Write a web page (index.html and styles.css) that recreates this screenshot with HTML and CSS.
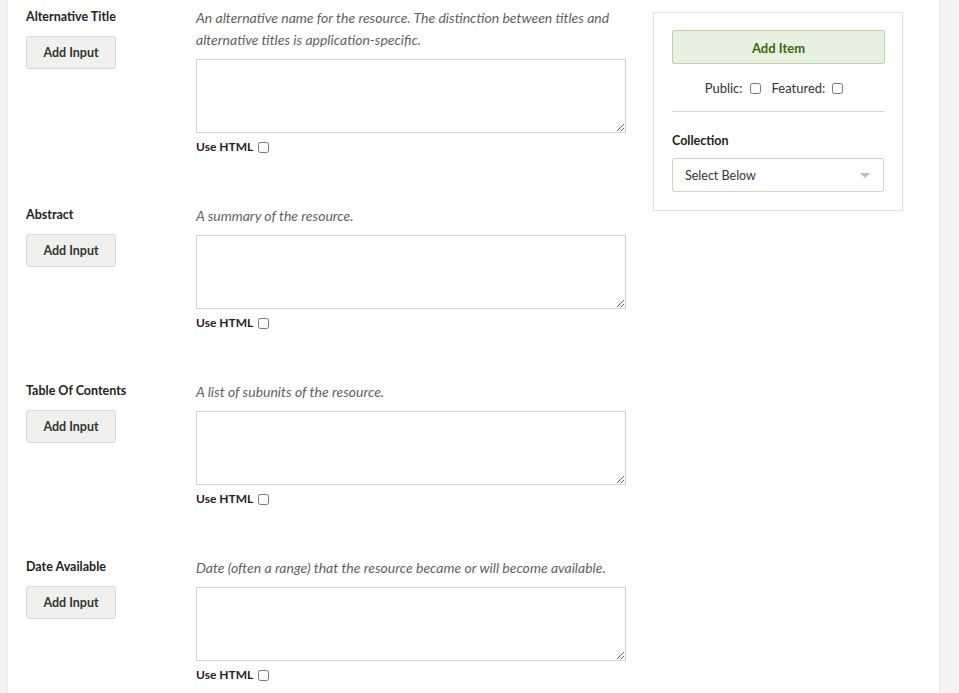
FILE: index.html
```html
<!DOCTYPE html>
<html lang="en">
<head>
<meta charset="utf-8">
<title>Add Item</title>
<link rel="stylesheet" href="styles.css">
</head>
<body>
<div class="page">
  <div class="main">
    <div class="field">
      <div class="field-head">
        <label class="field-label">Alternative Title</label>
        <button class="add-input" type="button">Add Input</button>
      </div>
      <div class="field-body">
        <p class="explanation">An alternative name for the resource. The distinction between titles and alternative titles is application-specific.</p>
        <textarea class="field-text"></textarea>
        <label class="use-html">Use HTML <input type="checkbox"></label>
      </div>
    </div>
    <div class="field">
      <div class="field-head">
        <label class="field-label">Abstract</label>
        <button class="add-input" type="button">Add Input</button>
      </div>
      <div class="field-body">
        <p class="explanation">A summary of the resource.</p>
        <textarea class="field-text"></textarea>
        <label class="use-html">Use HTML <input type="checkbox"></label>
      </div>
    </div>
    <div class="field">
      <div class="field-head">
        <label class="field-label">Table Of Contents</label>
        <button class="add-input" type="button">Add Input</button>
      </div>
      <div class="field-body">
        <p class="explanation">A list of subunits of the resource.</p>
        <textarea class="field-text"></textarea>
        <label class="use-html">Use HTML <input type="checkbox"></label>
      </div>
    </div>
    <div class="field">
      <div class="field-head">
        <label class="field-label">Date Available</label>
        <button class="add-input" type="button">Add Input</button>
      </div>
      <div class="field-body">
        <p class="explanation">Date (often a range) that the resource became or will become available.</p>
        <textarea class="field-text"></textarea>
        <label class="use-html">Use HTML <input type="checkbox"></label>
      </div>
    </div>
  </div>
  <aside class="sidebar">
    <div class="panel">
      <button class="add-item" type="button">Add Item</button>
      <div class="flags">
        <label class="flag">Public: <input type="checkbox"></label>
        <label class="flag">Featured: <input type="checkbox"></label>
      </div>
      <div class="collection">
        <label class="collection-label">Collection</label>
        <div class="select">Select Below<span class="caret"></span></div>
      </div>
    </div>
  </aside>
</div>
</body>
</html>
```
FILE: styles.css
```css
* { box-sizing: border-box; }
html, body { margin: 0; padding: 0; }
body {
  background: #f3f3f3;
  font-family: Lato, "Open Sans", sans-serif;
  color: #222;
  height: 693px;
  overflow: hidden;
}
.page {
  margin-left: 8px;
  width: 931px;
  min-height: 693px;
  background: #fff;
  box-shadow: 0 0 4px rgba(0,0,0,0.06);
  display: flex;
}
.main {
  padding: 7px 0 0 18px;
  width: 645px;
}
.field {
  display: grid;
  grid-template-columns: 170px 430px;
  margin-bottom: 48px;
}
.field-label {
  display: block;
  font-weight: 700;
  font-size: 12.5px;
  line-height: 20px;
  color: #222;
}
.add-input {
  display: block;
  margin-top: 9px;
  width: 90px;
  height: 33px;
  padding: 0;
  background: #f0f1ef;
  border: 1px solid #d8d8cb;
  border-radius: 3px;
  font-family: Lato, sans-serif;
  font-weight: 700;
  font-size: 12.5px;
  color: #333;
}
.explanation {
  margin: 0;
  font-style: italic;
  font-size: 14px;
  line-height: 22px;
  color: #5f5f5f;
}
.field-text {
  display: block;
  margin-top: 8px;
  width: 430px;
  height: 74px;
  border: 1px solid #d6d4bd;
  border-radius: 0;
  background: #fff;
  font-family: Lato, sans-serif;
}
.use-html {
  display: flex;
  align-items: center;
  margin-top: 4px;
  font-weight: 700;
  font-size: 12px;
  line-height: 20px;
  color: #222;
}
input[type="checkbox"] {
  width: 11px;
  height: 11px;
  margin: 0 0 0 5px;
}
.sidebar {
  padding-top: 12px;
}
.panel {
  width: 250px;
  border: 1px solid #e2e2dc;
  background: #fff;
  padding: 17px 18px 18px;
  box-shadow: 0 1px 2px rgba(0,0,0,0.04);
}
.add-item {
  display: block;
  width: 213px;
  height: 34px;
  padding: 0;
  background: #e8f0df;
  border: 1px solid #b7d59e;
  border-radius: 2px;
  font-family: Lato, sans-serif;
  font-weight: 700;
  font-size: 13px;
  line-height: 34px;
  color: #3a6914;
}
.flags {
  display: flex;
  justify-content: center;
  gap: 11px;
  margin-top: 14px;
  padding: 0 8px 12px 0;
  border-bottom: 1px solid #d6d6cc;
  font-size: 13px;
  line-height: 21px;
  color: #333;
}
.flag {
  display: flex;
  align-items: center;
}
.flag input[type="checkbox"] {
  margin-left: 7px;
}
.collection {
  padding-top: 19px;
}
.collection-label {
  display: block;
  font-weight: 700;
  font-size: 12.5px;
  line-height: 20px;
  color: #222;
}
.select {
  position: relative;
  margin-top: 7px;
  height: 34px;
  border: 1px solid #d6d4bd;
  border-radius: 2px;
  padding-left: 12px;
  font-size: 12.5px;
  line-height: 33px;
  color: #333;
}
.caret {
  position: absolute;
  right: 13px;
  top: 14px;
  width: 0;
  height: 0;
  border-left: 5px solid transparent;
  border-right: 5px solid transparent;
  border-top: 5px solid #bbb;
}
```
